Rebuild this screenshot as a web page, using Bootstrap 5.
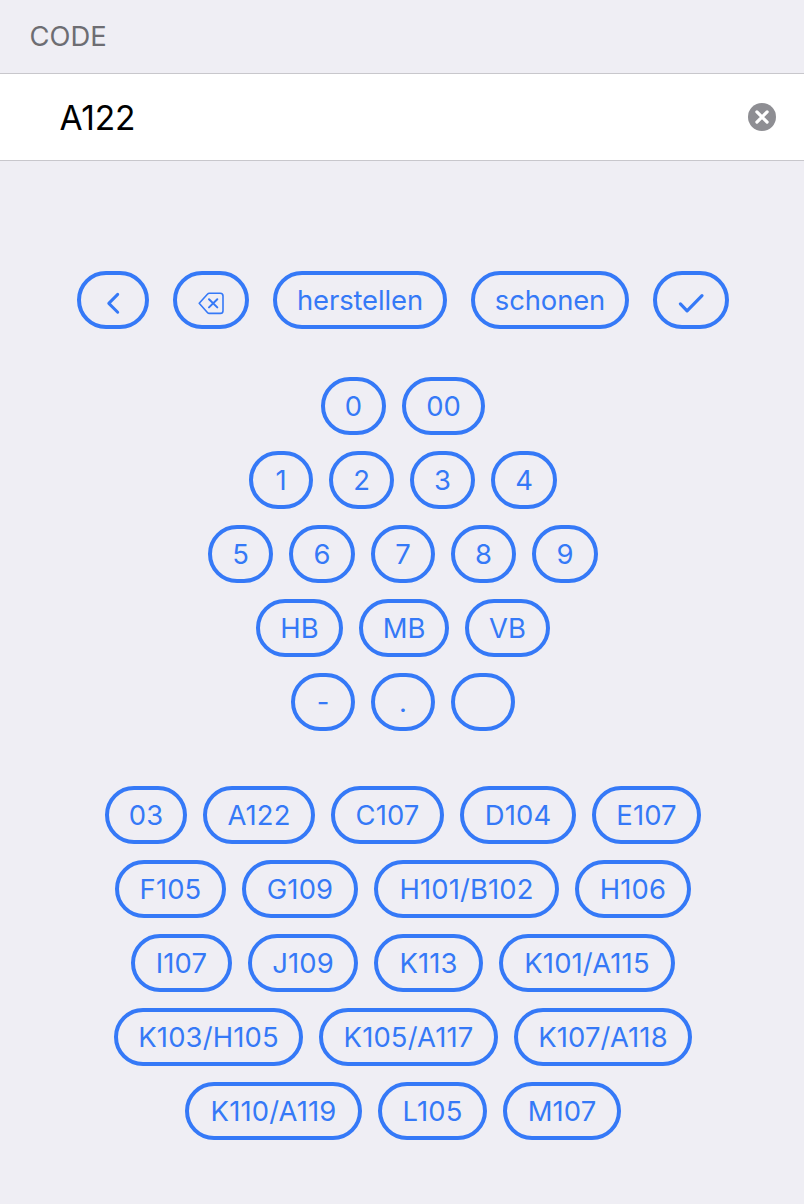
<!DOCTYPE html>
<html lang="de">
<head>
<meta charset="utf-8">
<meta name="viewport" content="width=device-width, initial-scale=1">
<title>Code</title>
<link href="https://cdn.jsdelivr.net/npm/bootstrap@5.3.0/dist/css/bootstrap.min.css" rel="stylesheet">
<style>
body { background: #efeef4; font-family: Inter, Roboto, sans-serif; min-height: 1204px; overflow: hidden; }
.section-title { height: 73px; padding: 0 29.5px; font-size: 27.4px; line-height: 73px; letter-spacing: 0; color: #6d6d72; }
.code-field { height: 88px; padding: 0 28px 0 59.5px; border: solid #c8c7cc; border-width: 1px 0; }
.code-field input { font-size: 33.5px; letter-spacing: -.2px; line-height: 40px; color: #000; margin-top: 1px; }
.code-field svg { margin-top: -1px; }
.keys { padding-left: 2px; }
.key { --bs-btn-color: #3579f7; --bs-btn-border-color: #3579f7; --bs-btn-border-width: 4px; --bs-btn-hover-bg: #3579f7;
  --bs-btn-padding-x: 0; --bs-btn-padding-y: 0; --bs-btn-font-family: Inter, Roboto, sans-serif;
  height: 58px; border-radius: 29px; font-size: 27.4px; line-height: 50px; white-space: nowrap; letter-spacing: 0; }
.tools .key { letter-spacing: -.1px; }
.rooms .key { letter-spacing: .15px; }
.row-gap { gap: 16px; }
.tools { margin-top: 110px; gap: 24px; }
.pad { margin-top: 48px; }
.rooms { margin-top: 55px; }
.w64{width:64px}.w65{width:65px}.w66{width:66px}.w72{width:72px}.w76{width:76px}.w82{width:82px}.w83{width:83px}
.w85{width:85px}.w87{width:87px}.w90{width:90px}.w101{width:101px}.w109{width:109px}.w110{width:110px}.w111{width:111px}
.w112{width:112px}.w113{width:113px}.w116{width:116px}.w118{width:118px}.w158{width:158px}.w174{width:174px}.w176{width:176px}
.w177{width:177px}.w178{width:178px}.w179{width:179px}.w185{width:185px}.w189{width:189px}
.key svg { fill: none; stroke: #3579f7; stroke-linecap: round; stroke-linejoin: round; }
</style>
</head>
<body>
<header class="section-title">CODE</header>
<div class="code-field bg-white d-flex align-items-center">
  <input class="form-control-plaintext p-0 flex-grow-1" value="A122" aria-label="Code">
  <svg class="flex-shrink-0" width="28" height="28" viewBox="0 0 28 28"><circle cx="14" cy="14" r="14" fill="#8e8e93"/><path d="M8.9 8.9l10.2 10.2M19.1 8.9L8.9 19.1" stroke="#fff" stroke-width="3.2" stroke-linecap="round"/></svg>
</div>
<main class="keys">
  <div class="tools d-flex justify-content-center">
    <button class="btn key w72 d-flex align-items-center justify-content-center" aria-label="Zurück"><svg width="64" height="50" viewBox="0 0 64 50"><path d="M36.7 19.4L27.8 28.4L36.7 37.2" stroke-width="3"/></svg></button>
    <button class="btn key w76 d-flex align-items-center justify-content-center" aria-label="Löschen"><svg width="68" height="50" viewBox="0 0 68 50"><path d="M22.2 28.3L30.4 19.2Q31.2 18.3 32.4 18.3H43.3Q46 18.3 46 21V35.7Q46 38.4 43.3 38.4H32.4Q31.2 38.4 30.4 37.5Z" stroke-width="1.6"/><path d="M32 24.3L40.3 32.4M40.3 24.3L32 32.4" stroke-width="2"/></svg></button>
    <button class="btn key w174">herstellen</button>
    <button class="btn key w158">schonen</button>
    <button class="btn key w76 d-flex align-items-center justify-content-center" aria-label="Fertig"><svg width="68" height="50" viewBox="0 0 68 50"><path d="M23.4 28.9L30.1 35.8L45 20.6" stroke-width="3.2"/></svg></button>
  </div>
  <div class="pad d-flex flex-column row-gap">
    <div class="d-flex justify-content-center row-gap"><button class="btn key w65">0</button><button class="btn key w83">00</button></div>
    <div class="d-flex justify-content-center row-gap"><button class="btn key w64">1</button><button class="btn key w65">2</button><button class="btn key w65">3</button><button class="btn key w66">4</button></div>
    <div class="d-flex justify-content-center row-gap"><button class="btn key w65">5</button><button class="btn key w66">6</button><button class="btn key w64">7</button><button class="btn key w65">8</button><button class="btn key w66">9</button></div>
    <div class="d-flex justify-content-center row-gap"><button class="btn key w87">HB</button><button class="btn key w90">MB</button><button class="btn key w85">VB</button></div>
    <div class="d-flex justify-content-center row-gap"><button class="btn key w64">-</button><button class="btn key w64">.</button><button class="btn key w64" aria-label="Leerzeichen"></button></div>
  </div>
  <div class="rooms d-flex flex-column row-gap">
    <div class="d-flex justify-content-center row-gap"><button class="btn key w82">03</button><button class="btn key w112">A122</button><button class="btn key w113">C107</button><button class="btn key w116">D104</button><button class="btn key w109">E107</button></div>
    <div class="d-flex justify-content-center row-gap"><button class="btn key w111">F105</button><button class="btn key w116">G109</button><button class="btn key w185">H101/B102</button><button class="btn key w116">H106</button></div>
    <div class="d-flex justify-content-center row-gap"><button class="btn key w101">I107</button><button class="btn key w110">J109</button><button class="btn key w109">K113</button><button class="btn key w176">K101/A115</button></div>
    <div class="d-flex justify-content-center row-gap"><button class="btn key w189">K103/H105</button><button class="btn key w179">K105/A117</button><button class="btn key w178">K107/A118</button></div>
    <div class="d-flex justify-content-center row-gap"><button class="btn key w177">K110/A119</button><button class="btn key w109">L105</button><button class="btn key w118">M107</button></div>
  </div>
</main>
<script src="https://cdn.jsdelivr.net/npm/bootstrap@5.3.0/dist/js/bootstrap.bundle.min.js"></script>
</body>
</html>
